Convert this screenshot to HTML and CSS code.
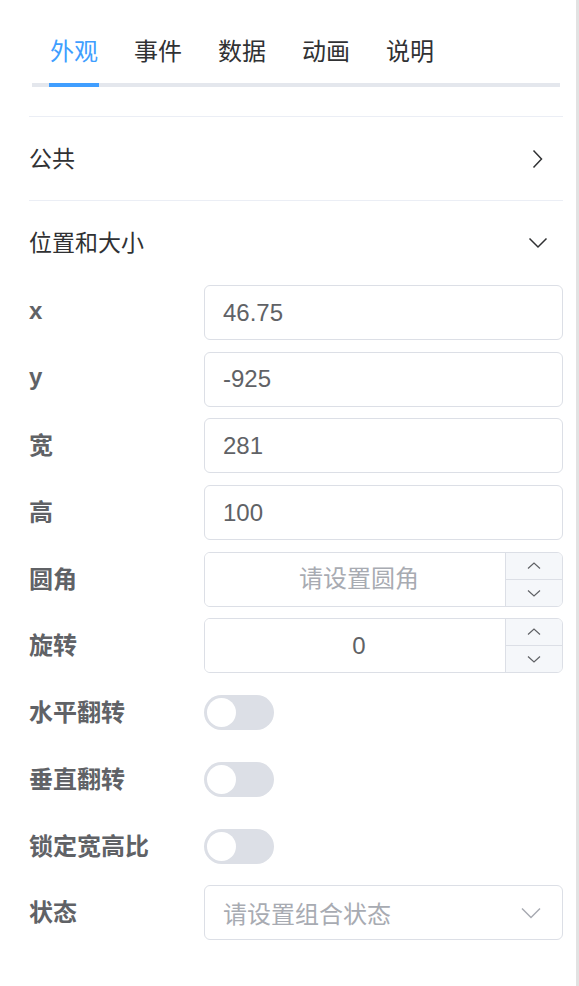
FILE: index.html
```html
<!DOCTYPE html>
<html lang="zh-CN">
<head>
    <meta charset="UTF-8">
    <meta name="viewport" content="width=device-width, initial-scale=1.0">
    <title>组件属性</title>
    <link rel="stylesheet" href="styles.css">
</head>
<body>
    <div class="panel">
        <div class="tabs">
            <div class="tab active">外观</div>
            <div class="tab">事件</div>
            <div class="tab">数据</div>
            <div class="tab">动画</div>
            <div class="tab">说明</div>
        </div>

        <div class="collapse">
            <div class="collapse-item">
                <div class="collapse-header">
                    <span class="collapse-title">公共</span>
                    <svg class="arrow" width="24" height="24" viewBox="0 0 24 24"><polyline points="7.5,3.5 15.5,12 7.5,20.5" /></svg>
                </div>
            </div>

            <div class="collapse-item open">
                <div class="collapse-header">
                    <span class="collapse-title">位置和大小</span>
                    <svg class="arrow" width="24" height="24" viewBox="0 0 24 24"><polyline points="3.5,7.5 12,16 20.5,7.5" /></svg>
                </div>
                <div class="collapse-body">
                    <div class="form-row">
                        <label class="form-label">x</label>
                        <input class="input" type="text" value="46.75">
                    </div>
                    <div class="form-row">
                        <label class="form-label">y</label>
                        <input class="input" type="text" value="-925">
                    </div>
                    <div class="form-row">
                        <label class="form-label">宽</label>
                        <input class="input" type="text" value="281">
                    </div>
                    <div class="form-row">
                        <label class="form-label">高</label>
                        <input class="input" type="text" value="100">
                    </div>
                    <div class="form-row">
                        <label class="form-label">圆角</label>
                        <div class="number-input">
                            <input type="text" placeholder="请设置圆角">
                            <div class="spin">
                                <span class="spin-btn"><svg width="14" height="8" viewBox="0 0 14 8"><polyline points="1,6.5 7,1 13,6.5" /></svg></span>
                                <span class="spin-btn"><svg width="14" height="8" viewBox="0 0 14 8"><polyline points="1,1.5 7,7 13,1.5" /></svg></span>
                            </div>
                        </div>
                    </div>
                    <div class="form-row">
                        <label class="form-label">旋转</label>
                        <div class="number-input">
                            <input type="text" value="0">
                            <div class="spin">
                                <span class="spin-btn"><svg width="14" height="8" viewBox="0 0 14 8"><polyline points="1,6.5 7,1 13,6.5" /></svg></span>
                                <span class="spin-btn"><svg width="14" height="8" viewBox="0 0 14 8"><polyline points="1,1.5 7,7 13,1.5" /></svg></span>
                            </div>
                        </div>
                    </div>
                    <div class="form-row">
                        <label class="form-label">水平翻转</label>
                        <span class="switch"><span class="knob"></span></span>
                    </div>
                    <div class="form-row">
                        <label class="form-label">垂直翻转</label>
                        <span class="switch"><span class="knob"></span></span>
                    </div>
                    <div class="form-row">
                        <label class="form-label">锁定宽高比</label>
                        <span class="switch"><span class="knob"></span></span>
                    </div>
                    <div class="form-row">
                        <label class="form-label">状态</label>
                        <div class="select">
                            <span class="placeholder">请设置组合状态</span>
                            <svg width="20" height="12" viewBox="0 0 20 12"><polyline points="1,1.5 10,10.5 19,1.5" /></svg>
                        </div>
                    </div>
                </div>
            </div>
        </div>
    </div>
</body>
</html>
```

FILE: styles.css
```css
body {
    margin: 0;
    background-color: #fff;
    font-family: "Liberation Sans", "Noto Sans CJK SC", sans-serif;
    color: #303133;
}

.panel {
    width: 576px;
    min-height: 100vh;
    border-right: 3px solid #e2e2e2;
    overflow: hidden;
}

/* tabs */
.tabs {
    display: flex;
    margin: 22px 16px 0 32px;
    border-bottom: 4px solid #e4e7ed;
}

.tab {
    position: relative;
    height: 61px;
    line-height: 59px;
    padding: 0 18px;
    font-size: 24px;
    color: #303133;
}

.tab.active {
    color: #409eff;
}

.tab.active::after {
    content: "";
    position: absolute;
    left: 17px;
    right: 17px;
    bottom: -4px;
    height: 4px;
    background-color: #409eff;
}

/* collapse */
.collapse {
    margin: 29px 13px 0 29px;
    border-top: 1px solid #ebeef5;
}

.collapse-header {
    display: flex;
    align-items: center;
    justify-content: space-between;
    height: 83px;
    font-size: 23px;
    color: #303133;
    border-bottom: 1px solid #ebeef5;
}

.collapse-title {
    padding-bottom: 4px;
}

.collapse-item.open .collapse-header {
    border-bottom-color: transparent;
}

.arrow {
    margin-right: 13px;
    fill: none;
    stroke: #303133;
    stroke-width: 1.5;
}

/* form */
.form-row {
    display: flex;
    align-items: center;
    height: 55px;
    margin-bottom: 11.7px;
}

.form-label {
    width: 175px;
    flex-shrink: 0;
    padding-bottom: 4px;
    font-size: 24px;
    font-weight: bold;
    color: #606266;
}

.input,
.number-input,
.select {
    flex: 1;
    height: 55px;
    box-sizing: border-box;
    border: 1px solid #dcdfe6;
    border-radius: 6px;
    background-color: #fff;
}

.input {
    padding: 0 18px;
    font-family: inherit;
    font-size: 24px;
    color: #606266;
    outline: none;
}

.number-input {
    display: flex;
    overflow: hidden;
}

.number-input input {
    flex: 1;
    min-width: 0;
    border: none;
    outline: none;
    padding: 0 10px 0 18px;
    text-align: center;
    font-family: inherit;
    font-size: 24px;
    color: #606266;
}

.number-input input::placeholder,
.placeholder {
    color: #a8abb2;
}

.spin {
    display: flex;
    flex-direction: column;
    width: 56px;
    border-left: 1px solid #dcdfe6;
    background-color: #f5f7fa;
}

.spin-btn {
    flex: 1;
    display: flex;
    align-items: center;
    justify-content: center;
}

.spin-btn + .spin-btn {
    border-top: 1px solid #dcdfe6;
}

.spin-btn svg {
    fill: none;
    stroke: #606266;
    stroke-width: 1.2;
}

.switch {
    position: relative;
    width: 70px;
    height: 35px;
    border-radius: 18px;
    background-color: #dcdfe6;
}

.knob {
    position: absolute;
    top: 3px;
    left: 3px;
    width: 29px;
    height: 29px;
    border-radius: 50%;
    background-color: #fff;
}

.select {
    display: flex;
    align-items: center;
    justify-content: space-between;
    padding: 0 21px 0 18px;
    font-size: 24px;
}

.select svg {
    fill: none;
    stroke: #a8abb2;
    stroke-width: 1.5;
}
```
